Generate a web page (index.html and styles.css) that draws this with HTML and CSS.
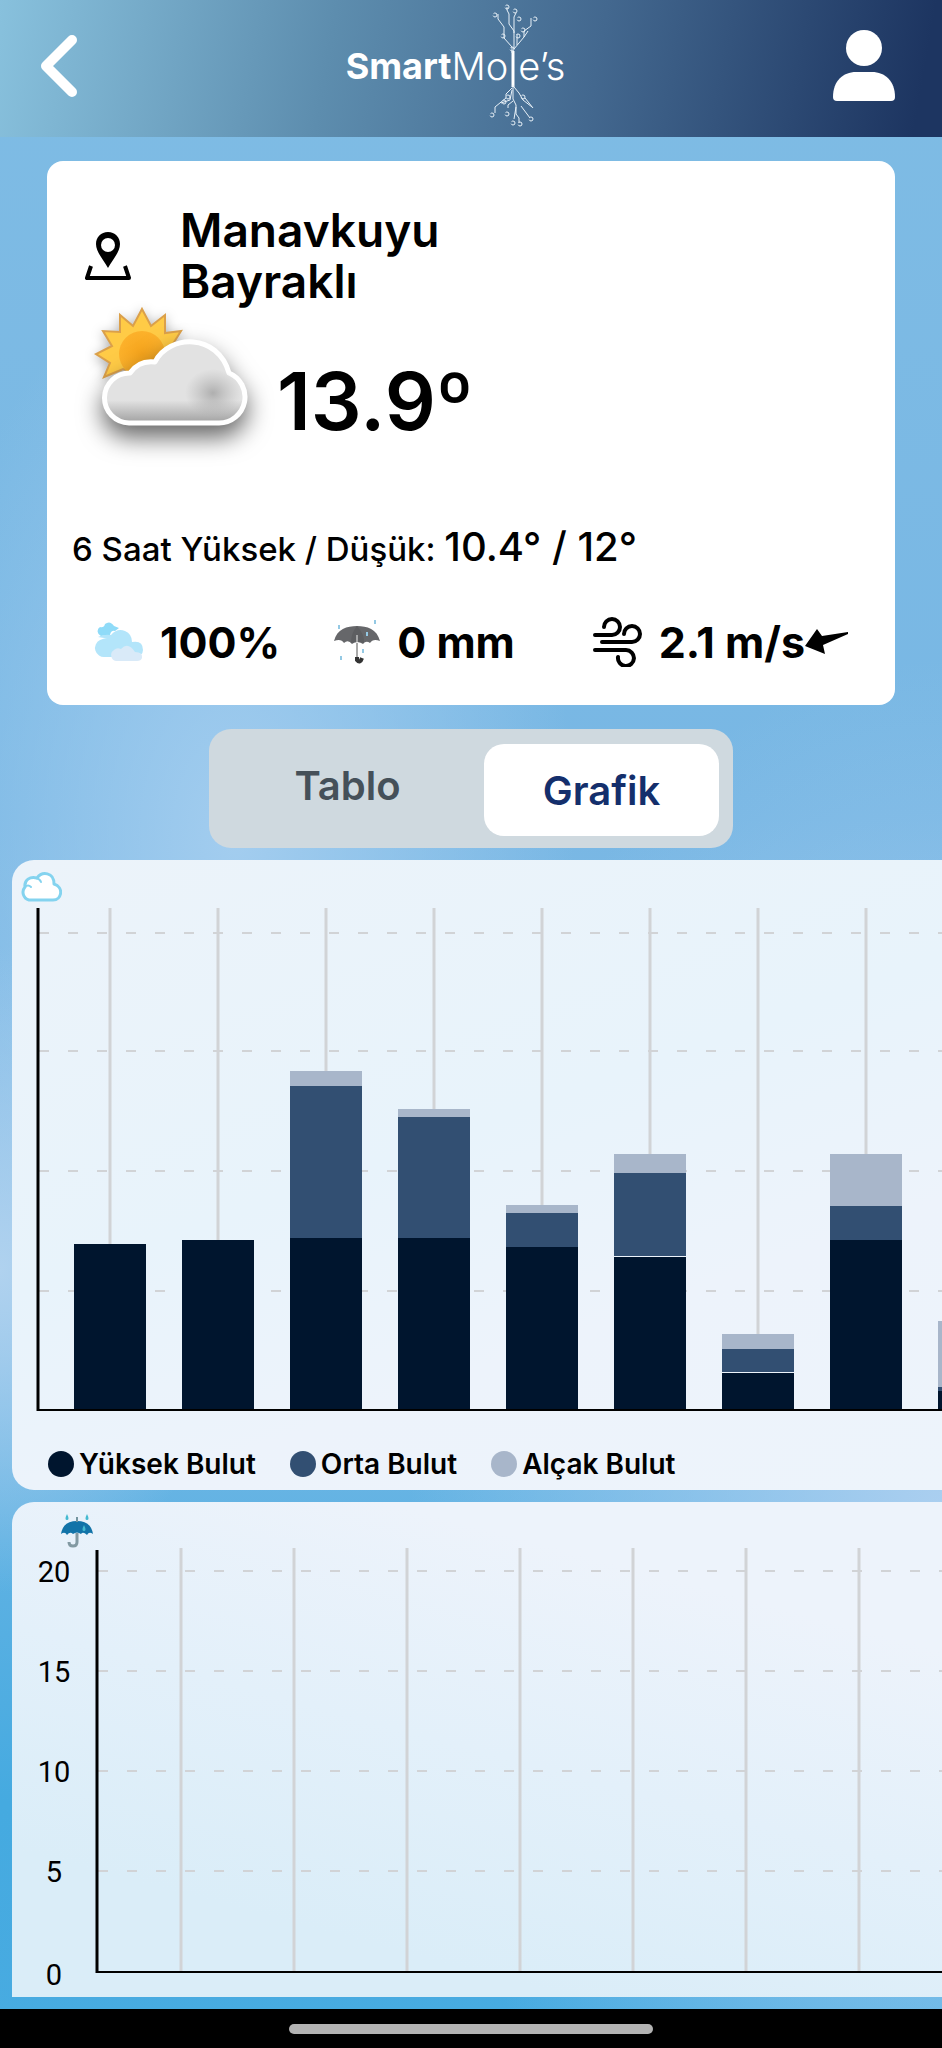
FILE: index.html
```html
<!DOCTYPE html>
<html lang="tr">
<head>
  <meta charset="UTF-8" />
  <meta name="viewport" content="width=device-width, initial-scale=1.0" />
  <title>SmartMole's - Hava Durumu</title>
  <link rel="stylesheet" href="styles.css">
  <script src="charts.js" defer></script>
</head>
<body>
  <header class="topbar">
    <button type="button" class="icon-btn" aria-label="Geri">
      <svg width="40" height="64" viewBox="0 0 40 64"><path d="M34 6 L8 32 L34 58" fill="none" stroke="#fff" stroke-width="10" stroke-linecap="round" stroke-linejoin="round"/></svg>
    </button>
    <div class="logo">
      <span class="logo-bold">Smart</span><span>Mo</span>
      <svg class="logo-tree" width="54" height="130" viewBox="0 0 54 130" fill="none" stroke="#e8f1f8" stroke-width="1">
        <path d="M27 50V86" stroke="#fff" stroke-width="3"/>
        <path d="M26 52V46L18 37V26L12 18V13M28 48V30L23 23V13L21 9V6M28 32V16L30 12M28 48L38 36V30L45 25V17M31 44V33M38 36L42 30"/>
        <path d="M27 84V98L30 104V113L33 117V122M26 87L20 93V97L9 106V112M27 100L22 104V107M28 86L33 92L37 99L46 106M26 89L24 99L15 102M35 105L44 117M30 106L28 118M39 97L47 107"/>
        <g stroke-dasharray="5 2"><circle cx="9" cy="14" r="2"/><circle cx="21" cy="6" r="2"/><circle cx="29" cy="10" r="2"/><circle cx="33" cy="18" r="2"/><circle cx="49" cy="18" r="2"/><circle cx="17" cy="35" r="2"/><circle cx="32" cy="35" r="2"/><circle cx="37" cy="29" r="2"/><circle cx="26" cy="48" r="2"/>
        <circle cx="22" cy="96" r="2"/><circle cx="37" cy="96" r="2"/><circle cx="18" cy="101" r="2"/><circle cx="6" cy="114" r="2"/><circle cx="21" cy="113" r="2"/><circle cx="45" cy="118" r="2"/><circle cx="27" cy="122" r="2"/><circle cx="34" cy="123" r="2"/></g>
      </svg>
      <span>e’s</span>
    </div>
    <button type="button" class="icon-btn" aria-label="Profil">
      <svg width="62" height="72" viewBox="0 0 62 72" fill="#fff"><circle cx="31" cy="18" r="18"/><path d="M0 67C0 51 10 42 23 42H39C52 42 62 51 62 67Q62 71 58 71H4Q0 71 0 67Z"/></svg>
    </button>
  </header>

  <main>
    <section class="weather">
      <div class="place">
        <svg width="46" height="48" viewBox="0 0 46 48"><path d="M23 0C16 0 11 5 11 12C11 20 18 27 23 36C28 27 35 20 35 12C35 5 30 0 23 0Z"/><circle cx="23" cy="13" r="7" fill="#fff"/><path d="M6 34L2 46H44L40 34" fill="none" stroke="#000" stroke-width="4" stroke-linejoin="round"/></svg>
        <h1>Manavkuyu<br>Bayraklı</h1>
      </div>

      <div class="current">
        <svg class="weather-icon" width="180" height="160" viewBox="0 0 180 160">
          <defs>
            <radialGradient id="sun"><stop offset="0" stop-color="#f7a51c"/><stop offset="1" stop-color="#fcb12b"/></radialGradient>
            <linearGradient id="cloud" x1="0" y1="0" x2="0" y2="1"><stop offset="0" stop-color="#e2e2e2"/><stop offset=".72" stop-color="#e2e2e2"/><stop offset="1" stop-color="#a0a0a0"/></linearGradient>
            <radialGradient id="shade"><stop offset="0" stop-color="#999" stop-opacity=".7"/><stop offset="1" stop-color="#aaa" stop-opacity="0"/></radialGradient>
          </defs>
          <path class="sun" d="M55 2L64 19L78 8L78 26L94 24L84 40L98 52L80 60L62 70L36 62L17 70L23 56L9 47L25 39L16 24L33 25L33 8L46 19Z" fill="#ffcb46" stroke="#dba04a" stroke-width="2"/>
          <circle cx="55" cy="47" r="23" fill="url(#sun)"/>
          <path class="cloud" d="M42 116A25 25 0 0 1 43 66Q52 53 68 55C82 27 131 26 142 66A26 26 0 0 1 132 116Z" fill="url(#cloud)" stroke="#fff" stroke-width="5" stroke-linejoin="round"/>
          <ellipse cx="126" cy="86" rx="28" ry="24" fill="url(#shade)"/>
        </svg>
        <span class="temp">13.9º</span>
      </div>

      <p class="range">6 Saat Yüksek / Düşük: <b>10.4° / 12°</b></p>

      <div class="stats">
        <div class="stat">
          <svg width="50" height="40" viewBox="0 0 50 40"><path d="M8 14A5 5 0 0 1 7 5Q11 6 12 2Q17-2 21 4L26 6L22 9Q18 8 17 13Z" fill="#8fdbf8"/><path d="M12 35A9 9 0 0 1 7 18Q13 15 17 17L5 15Q11 12 18 13Q24 6 32 9Q39 12 39 20Q50 18 50 28Q50 35 40 35Z" fill="#b3e5fa"/><path d="M23 39A6 6 0 0 1 21 28Q24 25 28 27Q35 19 42 30Q50 30 49 36Q48 39 44 39Z" fill="#d9eaf8"/></svg>
          <span>100%</span>
        </div>
        <div class="stat">
          <svg width="46" height="46" viewBox="0 0 46 46"><path d="M0 22C3 10 13 7 23 7S43 10 46 22Q39 19 36 24Q32 21 29 25Q23 21 18 25Q14 20 10 24Q7 19 0 22Z" fill="#66676a"/><path d="M17 24Q17 14 23 7Q31 16 30 24Q24 22 17 24" fill="#5d5e61"/><path d="M23 16V24" stroke="#eee" stroke-width="1"/><path d="M23 24V39" fill="none" stroke="#555" stroke-width="1"/><path d="M23 38V41Q26 45 28 39" fill="none" stroke="#333" stroke-width="4"/><path d="M5 6V10M41 1V5M33 13V17M29 30V34M7 37V41" stroke="#94c9e4" stroke-width="2"/></svg>
          <span>0 mm</span>
        </div>
        <div class="stat wind">
          <svg width="50" height="50" viewBox="0 0 50 50" fill="none" stroke="#000" stroke-width="4" stroke-linecap="round"><path d="M3 18H20A8 8 0 1 0 12 10M10 25H40A8 8 0 1 0 32 17M3 33H34A8 8 0 1 1 26 40"/></svg>
          <span>2.1 m/s</span>
          <svg class="wind-dir" width="44" height="26" viewBox="0 0 44 26"><path d="M0 17L12 0L17 7L43 3L43 5L18 16L20 25Z"/></svg>
        </div>
      </div>
    </section>

    <div class="tabs">
      <button type="button">Tablo</button>
      <button type="button" class="active">Grafik</button>
    </div>

    <section class="chart-card" aria-label="Bulut grafiği">
      <svg class="cloud-icon" width="42" height="30" viewBox="0 0 42 30" fill="#fff" stroke="#84d3ef" stroke-width="3" stroke-linecap="round" stroke-linejoin="round"><path d="M9 28A8 8 0 0 1 5 15C4 8 10 4 17 6C22-1 34 0 34 12C44 15 42 28 33 28Z"/><path d="M5 15Q8 12 11 15M16 6Q20 7 21 10" stroke-width="2"/></svg>
      <svg id="cloud-chart" class="chart" width="1400" height="506"></svg>
      <ul class="legend">
        <li class="high">Yüksek Bulut</li>
        <li class="mid">Orta Bulut</li>
        <li class="low">Alçak Bulut</li>
      </ul>
    </section>

    <section class="chart-card rain" aria-label="Yağış grafiği">
      <svg class="rain-icon" width="32" height="34" viewBox="0 0 32 34"><path d="M0 20Q2 7 16 7T32 20Q28 17 26 21Q22 17 20 20Q16 17 12 20Q9 17 6 21Q4 17 0 20Z" fill="#1273a8"/><path d="M16 3V8" stroke="#73949f" stroke-width="2"/><path d="M16 19V28Q16 32 12 32T8 28" fill="none" stroke="#8299a2" stroke-width="3"/><path d="M6 0Q3 6 6 6T6 0ZM26 0Q23 6 26 6T26 0ZM23 11Q20 17 23 17T23 11Z" fill="#45bad0"/></svg>
      <svg id="rain-chart" class="chart" width="1400" height="459"></svg>
    </section>
  </main>

  <footer class="navbar"><span class="handle"></span></footer>
</body>
</html>
```
FILE: styles.css
```css
* {
  box-sizing: border-box;
}
body {
  margin: 0;
  min-height: 100vh;
  display: flex;
  flex-direction: column;
  overflow-x: hidden;
  font-family: Inter, "Open Sans", sans-serif;
  font-weight: 600;
  color: #000;
  background:
    radial-gradient(ellipse at 0% 62%, #b0d2ef 0%, transparent 18%),
    radial-gradient(ellipse at 25% 41%, #a3cdef 0%, transparent 34%),
    radial-gradient(ellipse at 100% 74%, #abcff0 0%, transparent 40%),
    linear-gradient(#7fbce4, #78b7e4 40%, #86bde7 60%, #60b2e3 75%, #45aae0 88%, #48abe1);
}
button {
  border: none;
  background: none;
  padding: 0;
  font: inherit;
  cursor: pointer;
}
svg {
  display: block;
  flex-shrink: 0;
}
.topbar {
  height: 137px;
  padding: 0 47px 6px 38px;
  display: flex;
  justify-content: space-between;
  align-items: center;
  background: linear-gradient(100deg, #88c1dd 0%, #5d8dae 35%, #43688f 63%, #1d3561 97%);
}
.logo {
  display: flex;
  align-items: center;
  color: #fff;
  font-family: Inter, sans-serif;
  font-size: 38px;
  font-weight: 300;
}
.logo-bold {
  font-size: 36px;
  font-weight: 700;
}
.logo-tree {
  margin: 0 -22px 0 -22px;
}
main {
  flex: 1;
  padding: 24px 0 12px;
}
.weather {
  margin: 0 47px 24px;
  padding: 44px 25px 37px;
  background: #fff;
  border-radius: 16px;
}
.place {
  display: flex;
  align-items: center;
  gap: 49px;
  padding-left: 13px;
}
h1 {
  margin: 0;
  font-size: 46px;
  font-weight: 600;
  line-height: 51px;
}
.current {
  display: flex;
  align-items: center;
  gap: 10px;
  margin-top: -14px;
  padding-left: 15px;
}
.weather-icon {
  overflow: visible;
}
.sun {
  filter: drop-shadow(0 3px 6px #0005);
}
.cloud {
  filter: drop-shadow(0 12px 12px #0009);
}
.temp {
  font-size: 80px;
  line-height: 160px;
  padding-top: 28px;
}
.range {
  margin: 42px 0 43px;
  font-size: 33px;
  line-height: 48px;
  font-weight: 500;
}
.range b {
  font-size: 40px;
  font-weight: 500;
}
.stats {
  display: flex;
  align-items: center;
  gap: 54px;
  padding: 0 21px;
}
.stat {
  display: flex;
  align-items: center;
  gap: 17px;
  font-size: 43px;
  font-weight: 700;
  line-height: 52px;
}
.wind {
  margin-left: auto;
}
.wind-dir {
  margin-left: -17px;
}
.tabs {
  width: 524px;
  max-width: 100%;
  margin: 0 auto 12px;
  padding: 15px 14px 12px;
  display: grid;
  grid-template-columns: 1fr 235px;
  gap: 12px;
  border-radius: 22px;
  background: #cfd9df;
}
.tabs button {
  height: 92px;
  border-radius: 20px;
  font-size: 40px;
  color: #455059;
  padding-bottom: 10px;
}
.tabs .active {
  padding-bottom: 0;
  background: #fff;
  color: #142f6c;
}
.chart-card {
  overflow: hidden;
  margin: 0 0 12px 12px;
  border-radius: 22px 0 0 22px;
  background: linear-gradient(160deg, #ecf3fa, #e8f3fb 45%, #edf3fb 70%, #edf4fb);
}
.cloud-icon {
  margin: 12px 0 6px 8px;
}
.legend {
  display: flex;
  gap: 34px;
  margin: 0;
  padding: 32px 0 8px 36px;
  list-style: none;
  font-size: 28px;
  line-height: 36px;
}
.legend li {
  display: flex;
  align-items: center;
  gap: 5px;
}
.legend li::before {
  content: "";
  width: 26px;
  height: 26px;
  border-radius: 50%;
  background: #00152e;
}
.legend .mid::before {
  background: #324f72;
}
.legend .low::before {
  background: #a8b6ca;
}
.rain {
  margin-bottom: 0;
  border-radius: 22px 0 0 0;
  background: linear-gradient(195deg, #edf3fb 20%, #e3f0fa 50%, #daedf8 80%);
}
.rain-icon {
  margin: 12px 0 -10px 49px;
}
.chart .grid {
  stroke: #d1d3d6;
  stroke-width: 3;
}
.chart .dashed {
  stroke-width: 2;
  stroke-dasharray: 10 19;
}
.chart .axis {
  stroke: #000;
  stroke-width: 3;
}
.chart .base {
  stroke: #000;
  stroke-width: 2;
}
.chart text {
  font: 400 29px Roboto, sans-serif;
  text-anchor: middle;
}
.chart .high {
  fill: #00152e;
}
.chart .mid {
  fill: #324f72;
}
.chart .low {
  fill: #a8b6ca;
}
.navbar {
  height: 39px;
  display: flex;
  justify-content: center;
  align-items: center;
  background: #000;
}
.handle {
  width: 364px;
  height: 10px;
  border-radius: 5px;
  background: #b3b3b3;
}
```
FILE: charts.js
```js
const NS = "http://www.w3.org/2000/svg";

function add(svg, tag, attrs, text) {
  const el = document.createElementNS(NS, tag);
  for (const key in attrs) el.setAttribute(key, attrs[key]);
  if (text) el.textContent = text;
  svg.appendChild(el);
}

function line(svg, x1, y1, x2, y2, cls) {
  add(svg, "line", { x1, y1, x2, y2, class: cls });
}

// heights of the high / mid / low cloud layers, then the gap above the high one
const clouds = [
  [166, 0, 0, 0], [170, 0, 0, 0], [172, 152, 15, 0], [172, 121, 8, 0],
  [163, 34, 8, 0], [153, 83, 19, 1], [37, 23, 15, 1], [170, 34, 52, 0],
  [19, 4, 66, 0], [60, 20, 10, 0], [90, 30, 12, 0]
];

const cloudChart = document.getElementById("cloud-chart");
const cloudBase = 502;
[25, 143, 263, 383].forEach(y => line(cloudChart, 27, y, 1400, y, "grid dashed"));
clouds.forEach(([high, mid, low, gap], i) => {
  const x = 98 + i * 108;
  line(cloudChart, x, 0, x, cloudBase - high - mid - low - gap, "grid");
  let y = cloudBase - high;
  add(cloudChart, "rect", { x: x - 36, y, width: 72, height: high, class: "high" });
  y -= mid + gap;
  add(cloudChart, "rect", { x: x - 36, y, width: 72, height: mid, class: "mid" });
  y -= low;
  add(cloudChart, "rect", { x: x - 36, y, width: 72, height: low, class: "low" });
});
line(cloudChart, 26, 0, 26, 503, "axis");
line(cloudChart, 25, 502, 1400, 502, "base");

const rainChart = document.getElementById("rain-chart");
[20, 15, 10, 5, 0].forEach((value, i) => {
  const y = 33 + i * 100;
  if (value) line(rainChart, 86, y, 1400, y, "grid dashed");
  add(rainChart, "text", { x: 42, y: y + 11 + (value ? 0 : 3) }, String(value));
});
for (let i = 0; i < 11; i++) {
  const x = 169 + i * 113;
  line(rainChart, x, 10, x, 434, "grid");
}
line(rainChart, 85, 12, 85, 435, "axis");
line(rainChart, 84, 434, 1400, 434, "base");
```
